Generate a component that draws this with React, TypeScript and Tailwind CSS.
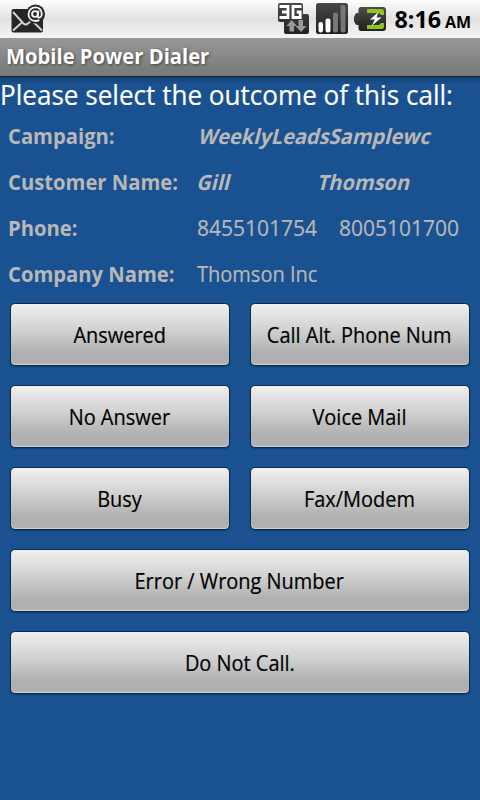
import type { ReactNode } from "react";

const outcomes = [
  { label: "Answered" },
  { label: "Call Alt. Phone Num" },
  { label: "No Answer" },
  { label: "Voice Mail" },
  { label: "Busy" },
  { label: "Fax/Modem" },
  { label: "Error / Wrong Number", wide: true },
  { label: "Do Not Call.", wide: true },
];

function MailIcon() {
  return (
    <svg className="w-[36px] h-[30px]" viewBox="0 0 36 30" fill="none">
      <rect x="1.500" y="5" width="31.500" height="23.500" rx="2" fill="#262626" />
      <path d="M3 8l10.500 11.500q2 2 4.500 0L22 16M3 26.500l10-9M32 26.500l-8.500-8.500" stroke="#d4d4d4" strokeWidth="1.900" />
      <circle cx="25.500" cy="10" r="9.500" fill="#262626" />
      <circle cx="25" cy="10" r="2.900" stroke="#f4f4f4" strokeWidth="1.900" />
      <path d="M28.500 6.500l-.7 5.500q0 2 1.600 1.600c2-.6 2.500-3 2.300-4.500C31.200 5 28.500 3.300 25.500 3.300c-4 0-7 3-7 7s3 6.700 7 6.700c1.600 0 2.600-.3 3.800-.9" stroke="#f4f4f4" strokeWidth="1.800" />
    </svg>
  );
}

function NetworkIcon() {
  return (
    <svg className="w-[32px] h-[34px]" viewBox="0 0 32 34" fill="none">
      <defs>
        <linearGradient id="network" x1="0" y1="0" x2="0" y2="1">
          <stop offset="0" stopColor="#4a4a4a" />
          <stop offset="1" stopColor="#222" />
        </linearGradient>
      </defs>
      <path d="M3 1h21a2 2 0 0 1 2 2v9h4a2 2 0 0 1 2 2v16a2 2 0 0 1-2 2H9a2 2 0 0 1-2-2V20H3a2 2 0 0 1-2-2V3a2 2 0 0 1 2-2z" fill="url(#network)" />
      <path d="M2.500 4.500h8.500v11H2.500M5 10h6M24.500 4.500H16v11h7.200V10h-3.500" stroke="#fff" strokeWidth="2.800" />
      <path d="M14.500 18l5.500 6h-3v5.500h-4.500V24h-3z" fill="#999" />
      <path d="M24 30l-5.500-6h3v-6H26v6h3.500z" fill="#999" />
    </svg>
  );
}

function SignalIcon() {
  return (
    <svg className="w-[32px] h-[32px]" viewBox="0 0 32 32">
      <defs>
        <linearGradient id="signal" x1="0" y1="0" x2="0" y2="1">
          <stop offset="0" stopColor="#484848" />
          <stop offset="1" stopColor="#1e1e1e" />
        </linearGradient>
      </defs>
      <rect width="32" height="31" rx="2.500" fill="url(#signal)" />
      <rect x="2.500" y="19" width="4.500" height="10.500" rx="2" fill="#fff" />
      <rect x="9.500" y="15.500" width="5" height="14" rx="2" fill="#fff" />
      <rect x="17" y="9.500" width="5" height="20" rx="2" fill="#777" />
      <rect x="24.500" y="2" width="5" height="27.500" rx="2" fill="#777" />
    </svg>
  );
}

function BatteryIcon() {
  return (
    <svg className="w-[32px] h-[24px]" viewBox="0 0 32 24">
      <defs>
        <linearGradient id="battery" x1="0" y1="0" x2="0" y2="1">
          <stop offset="0" stopColor="#4c4c4c" />
          <stop offset="1" stopColor="#202020" />
        </linearGradient>
      </defs>
      <path d="M7 0h22q3 0 3 3v18q0 3-3 3H7q-2.500 0-2.500-3v-3H3q-1 0-1.500-1L0 14v-4l1.500-3Q2 6 3 6h1.500V3Q4.500 0 7 0z" fill="url(#battery)" />
      <path d="M13 2h14.500q2.500 0 2.500 2.500V8h-3l-2-2H13z" fill="#8fc31f" />
      <path d="M13 22h14.500q2.500 0 2.500-2.500V16h-3l-2 2H13z" fill="#8fc31f" />
      <path d="M24.500 5L16 12.500h5L17.500 19l10-8.500h-5z" fill="#fff" />
    </svg>
  );
}

function Row({ label, children }: { label: string; children: ReactNode }) {
  return (
    <div className="flex h-[46px] pl-2">
      <div className="w-[189px] shrink-0 font-bold">
        <span className="inline-block origin-left scale-x-[0.963]">{label}</span>
      </div>
      {children}
    </div>
  );
}

function Slanted({ children }: { children: ReactNode }) {
  return <span className="inline-block font-bold origin-left [transform:skewX(-14deg)_scaleX(0.955)]">{children}</span>;
}

export default function App() {
  return (
    <div className="flex flex-col w-[480px] h-[800px] overflow-hidden bg-[#1a5190] font-['Open_Sans','Noto_Sans',sans-serif] whitespace-nowrap">
      <div className="flex items-center h-[38px] shrink-0 pl-[10px] pr-[9px] bg-linear-to-b from-[#fdfdfd] via-[#e2e2e2] to-[#f4f4f4]">
        <MailIcon />
        <div className="flex items-center ml-auto">
          <NetworkIcon />
          <div className="ml-[7px]"><SignalIcon /></div>
          <div className="ml-[6px]"><BatteryIcon /></div>
          <div className="flex items-baseline ml-[7px] gap-1 font-bold text-black leading-none">
            <span className="text-[24px] origin-right scale-x-[0.97]">8:16</span>
            <span className="text-[16px]">AM</span>
          </div>
        </div>
      </div>
      <div className="flex items-center h-[39px] shrink-0 pl-[6px] pb-px bg-linear-to-b from-[#989898] to-[#777] border-b border-[#0c2342] text-[21px] font-bold text-white [text-shadow:1px_1px_3px_#444]">
        <span className="origin-left scale-x-[0.962]">Mobile Power Dialer</span>
      </div>
      <div className="h-[46px] bg-linear-to-b from-[#153f70] to-[#1a5190] to-15%">
        <h1 className="text-[27px] leading-[36px] text-white origin-left scale-x-[0.966] [-webkit-text-stroke:0.2px]">
          Please select the outcome of this call:
        </h1>
      </div>
      <div className="text-[21px] leading-[26px] text-[#b8b8b8]">
        <Row label="Campaign:"><Slanted>WeeklyLeadsSamplewc</Slanted></Row>
        <Row label="Customer Name:">
          <div className="w-[119px] pl-px"><Slanted>Gill</Slanted></div>
          <Slanted>Thomson</Slanted>
        </Row>
        <Row label="Phone:">
          <span className="w-[142px] [-webkit-text-stroke:0.2px]">8455101754</span>
          <span className="[-webkit-text-stroke:0.2px]">8005101700</span>
        </Row>
        <Row label="Company Name:">
          <span className="origin-left scale-x-[0.953] [-webkit-text-stroke:0.2px]">Thomson Inc</span>
        </Row>
      </div>
      <div className="grid grid-cols-2 gap-x-5 gap-y-[19px] px-[10px] -mt-1">
        {outcomes.map(({ label, wide }) => (
          <button
            key={label}
            className={`h-[63px] pt-[3px] pr-px rounded-[5px] border border-[#0d2b52] bg-linear-to-b from-[#f0f0f0] via-[#cfcfcf] via-45% to-[#b0b0b0] to-80% text-[21px] text-black shadow-[inset_0_-1px_1px_#d0d5d3,0_1px_1px_#0d2b5280] [-webkit-text-stroke:0.2px] ${wide ? "col-span-2" : ""}`}
          >
            <span className="inline-block scale-x-[0.95]">{label}</span>
          </button>
        ))}
      </div>
    </div>
  );
}
